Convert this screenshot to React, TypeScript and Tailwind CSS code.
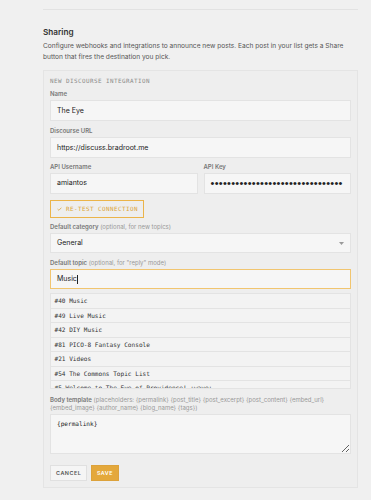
import React from "react";

const items = [
  "#40 Music",
  "#49 Live Music",
  "#42 DIY Music",
  "#81 PICO-8 Fantasy Console",
  "#21 Videos",
  "#54 The Commons Topic List",
  "#5 Welcome to The Eye of Providence! :wave:",
  "#12 Music Discussion",
];

const sans = { fontFamily: "Inter, 'Liberation Sans', sans-serif" };
const mono = { fontFamily: "'DejaVu Sans Mono', 'Liberation Mono', monospace" };

function Label({ children, hint }: { children: React.ReactNode; hint?: string }) {
  return (
    <div className="text-[6px] leading-[8px] mb-[2px] whitespace-nowrap">
      <span className="font-semibold text-[#777]">{children}</span>
      {hint ? <span className="text-[#999]"> {hint}</span> : null}
    </div>
  );
}

export default function App() {
  return (
    <div className="min-h-[500px] bg-[#f0f0f0] pl-[43px] pt-[9px]" style={sans}>
      <div className="w-[315px]">
        <div className="h-px bg-[#e2e2e2]" />
        <h2 className="mt-[16px] text-[8.2px] leading-[12px] font-semibold text-[#333]">Sharing</h2>
        <p className="mt-[3.4px] text-[6.6px] leading-[10.6px] text-[#555]">
          Configure webhooks and integrations to announce new posts. Each post in your list gets a Share button that fires the destination you pick.
        </p>
        <div className="mt-[7.4px] border border-[#e4e4e4] bg-[#eeeeee] px-[6px] pt-[6px] pb-[5.6px]">
          <div className="text-[5.9px] leading-[8px] tracking-[0.45px] text-[#8a8a8a] mb-[5.3px]" style={mono}>
            NEW DISCOURSE INTEGRATION
          </div>

          <Label>Name</Label>
          <div className="h-[21px] border border-[#e3e3e3] bg-[#f6f6f6] px-[6px] flex items-center text-[7px] text-[#222]">
            The Eye
          </div>

          <div className="mt-[6px]">
            <Label>Discourse URL</Label>
            <div className="h-[21px] border border-[#e3e3e3] bg-[#f6f6f6] px-[6px] flex items-center text-[7px] text-[#222]">
              https://discuss.bradroot.me
            </div>
          </div>

          <div className="mt-[5px] flex gap-[6px]">
            <div className="flex-1">
              <Label>API Username</Label>
              <div className="h-[20.4px] border border-[#e3e3e3] bg-[#f6f6f6] px-[6px] flex items-center text-[7px] text-[#222]">
                amiantos
              </div>
            </div>
            <div className="flex-1">
              <Label>API Key</Label>
              <div className="h-[20.4px] border border-[#e3e3e3] bg-[#f6f6f6] px-[6px] flex items-center text-[11px] tracking-[0.28px] text-[#222] overflow-hidden whitespace-nowrap" style={{ fontFamily: "'Liberation Sans', sans-serif" }}>
                ••••••••••••••••••••••••••••••••
              </div>
            </div>
          </div>

          <div className="mt-[6.5px] flex">
            <div className="h-[17.6px] w-[93.7px] border border-[#ebb44a] flex items-center pl-[6px] text-[5.9px] tracking-[0.45px] text-[#dba43b]" style={mono}>
              <svg width="5" height="4" viewBox="0 0 5 4" className="mr-[4px]">
                <path d="M0.6 2.1 L1.9 3.3 L4.4 0.7" fill="none" stroke="#dba43b" strokeWidth="0.8" />
              </svg>
              RE-TEST CONNECTION
            </div>
          </div>

          <div className="mt-[5.5px]">
            <Label hint="(optional, for new topics)">Default category</Label>
            <div className="h-[20px] border border-[#e3e3e3] bg-[#f6f6f6] px-[6px] flex items-center justify-between text-[7px] text-[#222]">
              <span>General</span>
              <svg width="5" height="3" viewBox="0 0 5 3" className="mr-[0.5px]">
                <path d="M0 0 L5 0 L2.5 3 Z" fill="#9a9a9a" />
              </svg>
            </div>
          </div>

          <div className="mt-[6px]">
            <Label hint={'(optional, for "reply" mode)'}>Default topic</Label>
            <div className="h-[20px] border border-[#f1c56f] bg-[#f6f6f6] px-[6px] flex items-center text-[7px] text-[#222]">
              <span>Music</span>
              <span className="inline-block w-px h-[9px] bg-[#222] ml-[0.5px]" />
            </div>
          </div>

          <div className="mt-[4px] h-[96px] overflow-hidden border border-[#e3e3e3] bg-[#f3f3f3]">
            {items.map((t) => (
              <div key={t} className="h-[14.5px] border-b border-[#e3e3e3] px-[3.5px] flex items-center text-[6.1px] text-[#333] whitespace-nowrap" style={mono}>
                {t}
              </div>
            ))}
          </div>

          <div className="mt-[6.5px] text-[6px] leading-[8px] pr-[6px]">
            <span className="font-semibold text-[#777]">Body template</span>
            <span className="text-[#999]"> (placeholders: {"{permalink}"} {"{post_title}"} {"{post_excerpt}"} {"{post_content}"} {"{embed_url}"} {"{embed_image}"} {"{author_name}"} {"{blog_name}"} {"{tags}"})</span>
          </div>
          <textarea
            readOnly
            value="{permalink}"
            className="mt-[2px] block w-full h-[40.3px] border border-[#e3e3e3] bg-[#f6f6f6] px-[6px] pt-[4px] text-[6.1px] leading-[9px] text-[#222] outline-none"
            style={mono}
          />

          <div className="mt-[10.7px] flex gap-[3.7px]">
            <div className="h-[16.7px] w-[37.3px] border border-[#e0e0e0] bg-[#f5f5f5] flex items-center justify-center text-[5.4px] font-semibold tracking-[0.5px] text-[#555]">
              CANCEL
            </div>
            <div className="h-[16.7px] w-[28px] border border-[#dca23b] bg-[#e4a83b] flex items-center justify-center text-[5.4px] font-semibold tracking-[0.5px] text-white">
              SAVE
            </div>
          </div>
        </div>
      </div>
    </div>
  );
}
